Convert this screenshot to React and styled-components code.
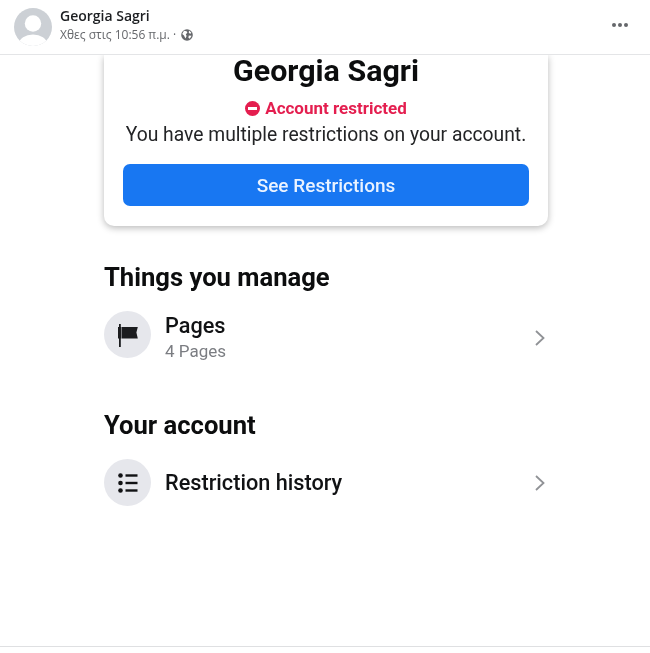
import React from 'react';
import styled, { createGlobalStyle } from 'styled-components';

const GlobalStyle = createGlobalStyle`
  html, body {
    margin: 0;
    padding: 0;
    background: #ffffff;
  }
  * { box-sizing: border-box; }
`;

const Page = styled.div`
  width: 650px;
  height: 653px;
  background: #ffffff;
  display: flex;
  flex-direction: column;
  overflow: hidden;
`;

const PostHeader = styled.header`
  height: 55px;
  flex: none;
  display: flex;
  align-items: flex-start;
  padding: 8px 14px 0;
  border-bottom: 1px solid #e4e5e7;
  background: #ffffff;
  position: relative;
  z-index: 2;
`;

const Avatar = styled.svg`
  width: 38px;
  height: 38px;
  flex: none;
  filter: blur(0.4px);
`;

const HeaderText = styled.div`
  margin: -1px 0 0 8px;
  flex: 1;
  font-family: "Open Sans", "Liberation Sans", sans-serif;
  filter: blur(0.25px);
`;

const AuthorName = styled.div`
  font-size: 14px;
  line-height: 18px;
  font-weight: 550;
  color: #1c1e21;
`;

const PostMeta = styled.div`
  display: flex;
  align-items: center;
  gap: 5px;
  margin-top: 2px;
  font-size: 12px;
  line-height: 16px;
  color: #65676b;
`;

const MoreDots = styled.div`
  display: flex;
  gap: 2px;
  margin: 15px 8px 0 0;
`;

const Dot = styled.span`
  width: 4px;
  height: 4px;
  border-radius: 50%;
  background: #65676b;
`;

const Shot = styled.main`
  flex: 1;
  padding: 0 102px 0 104px;
  font-family: Roboto, "Liberation Sans", sans-serif;
  filter: blur(0.4px);
`;

const Card = styled.section`
  height: 171px;
  width: 444px;
  padding: 0 19px;
  background: #ffffff;
  border-radius: 0 0 10px 10px;
  box-shadow: 0 2px 7px rgba(0, 0, 0, 0.28);
  display: flex;
  flex-direction: column;
  align-items: center;
  text-align: center;
`;

const ProfileName = styled.h1`
  margin: -1px 0 0;
  font-size: 30.4px;
  line-height: 34px;
  font-weight: 700;
  color: #0c0d0e;
`;

const Status = styled.div`
  display: flex;
  align-items: center;
  gap: 5px;
  margin-top: 10px;
  font-size: 17px;
  line-height: 20px;
  font-weight: 700;
  color: #e41e4f;
`;

const StopBadge = styled.span`
  width: 15px;
  height: 15px;
  border-radius: 50%;
  background: #e41e4f;
  display: flex;
  align-items: center;
  justify-content: center;
  &::after {
    content: '';
    width: 9px;
    height: 3px;
    background: #ffffff;
  }
`;

const StatusNote = styled.p`
  margin: 5px 0 0;
  font-size: 19.3px;
  line-height: 24px;
  color: #232426;
  white-space: nowrap;
`;

const PrimaryButton = styled.button`
  width: 406px;
  height: 42px;
  margin-top: 17px;
  flex: none;
  border: 0;
  border-radius: 7px;
  background: #1877f2;
  color: #eaf3ff;
  font-family: inherit;
  font-size: 19px;
  font-weight: 500;
`;

const SectionTitle = styled.h2`
  margin: ${(props) => props.$top}px 0 0;
  font-size: 25.6px;
  line-height: 30px;
  font-weight: 700;
  color: #0c0d0e;
`;

const Row = styled.div`
  display: flex;
  align-items: center;
  width: 444px;
  height: ${(props) => (props.$tall ? 54 : 47)}px;
  margin-top: 19px;
`;

const IconCircle = styled.div`
  width: 47px;
  height: 47px;
  flex: none;
  align-self: flex-start;
  border-radius: 50%;
  background: #e6e7ec;
  display: flex;
  align-items: center;
  justify-content: center;
`;

const RowText = styled.div`
  flex: 1;
  margin-left: 14px;
  align-self: ${(props) => (props.$tall ? 'flex-start' : 'center')};
  padding-top: ${(props) => (props.$tall ? 2 : 0)}px;
`;

const RowTitle = styled.div`
  font-size: 21.7px;
  line-height: 26px;
  font-weight: 500;
  color: #111214;
`;

const RowSub = styled.div`
  margin-top: 2px;
  font-size: 17px;
  line-height: 20px;
  color: #7b7d82;
`;

const Chevron = styled.svg`
  width: 12px;
  height: 18px;
  margin-right: 2px;
`;

const BottomRule = styled.div`
  height: 1px;
  flex: none;
  margin-bottom: 6px;
  background: #dfe0e2;
`;

const ChevronIcon = () => (
  <Chevron viewBox="0 0 12 18">
    <path d="M2 2 L9.5 9 L2 16" fill="none" stroke="#909296" strokeWidth="1.8" />
  </Chevron>
);

const App = () => (
  <Page>
    <GlobalStyle />
    <PostHeader>
      <Avatar viewBox="0 0 38 38">
        <defs>
          <clipPath id="avatarClip">
            <circle cx="19" cy="19" r="19" />
          </clipPath>
        </defs>
        <circle cx="19" cy="19" r="19" fill="#ccd0d5" />
        <g clipPath="url(#avatarClip)" fill="#ffffff">
          <circle cx="19" cy="15.5" r="8.2" />
          <ellipse cx="19" cy="36" rx="14" ry="9.5" />
        </g>
      </Avatar>
      <HeaderText>
        <AuthorName>Georgia Sagri</AuthorName>
        <PostMeta>
          Χθες στις 10:56 π.μ. ·
          <svg width="12" height="12" viewBox="0 0 12 12">
            <circle cx="6" cy="6" r="5.8" fill="#65676b" />
            <path d="M3 1.8 L5.6 2.2 L6.4 3.8 L4.8 5.2 L5.6 7 L4.4 9.4 L3 6.6 L1.2 5 Z M8 1.6 L10.4 3.8 L9.4 4.8 L7.8 4 Z M7.8 6.6 L10.6 6.8 L8.8 9.8 L7.4 8.8 Z" fill="#ffffff" />
          </svg>
        </PostMeta>
      </HeaderText>
      <MoreDots>
        <Dot />
        <Dot />
        <Dot />
      </MoreDots>
    </PostHeader>
    <Shot>
      <Card>
        <ProfileName>Georgia Sagri</ProfileName>
        <Status>
          <StopBadge />
          Account restricted
        </Status>
        <StatusNote>You have multiple restrictions on your account.</StatusNote>
        <PrimaryButton>See Restrictions</PrimaryButton>
      </Card>
      <SectionTitle $top={36}>Things you manage</SectionTitle>
      <Row $tall>
        <IconCircle>
          <svg width="24" height="26" viewBox="0 0 24 26">
            <rect x="3" y="2" width="1.8" height="23" fill="#1b1c1f" />
            <path d="M2 5 H5.4 V16.5 H2 Z" fill="#1b1c1f" />
            <path d="M5.8 5 H21.8 L20.4 10.5 L21.8 16.5 H5.8 Z" fill="#1b1c1f" />
          </svg>
        </IconCircle>
        <RowText $tall>
          <RowTitle>Pages</RowTitle>
          <RowSub>4 Pages</RowSub>
        </RowText>
        <ChevronIcon />
      </Row>
      <SectionTitle $top={45}>Your account</SectionTitle>
      <Row>
        <IconCircle>
          <svg width="22" height="20" viewBox="0 0 22 20">
            <circle cx="3.5" cy="2.5" r="2.3" fill="#111214" />
            <circle cx="3.5" cy="10" r="2.3" fill="#111214" />
            <circle cx="3.5" cy="17.5" r="2.3" fill="#111214" />
            <rect x="8.5" y="1.3" width="12" height="2.4" fill="#111214" />
            <rect x="8.5" y="8.8" width="12" height="2.4" fill="#111214" />
            <rect x="8.5" y="16.3" width="12" height="2.4" fill="#111214" />
          </svg>
        </IconCircle>
        <RowText>
          <RowTitle>Restriction history</RowTitle>
        </RowText>
        <ChevronIcon />
      </Row>
    </Shot>
    <BottomRule />
  </Page>
);

export default App;
